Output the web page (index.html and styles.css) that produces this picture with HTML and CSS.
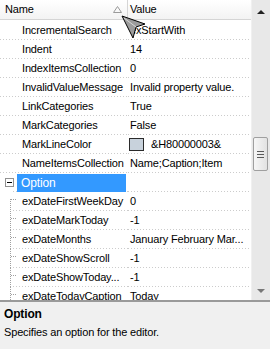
FILE: index.html
```html
<!DOCTYPE html>
<html lang="en">
<head>
  <meta charset="UTF-8">
  <title>Property grid</title>
  <link rel="stylesheet" href="styles.css">
</head>
<body>
  <div class="grid">
    <div class="main">
      <div class="list">
        <div class="header">
          <div class="hcell hname">
            <span>Name</span>
            <svg class="sort" width="9" height="7" viewBox="0 0 9 7"><path d="M4.5 0.5 L8.5 6.5 L0.5 6.5 Z" fill="none" stroke="#9a9a9a"/></svg>
          </div>
          <div class="hcell hvalue">Value</div>
        </div>
        <div class="rows">
          <div class="row"><div class="cell name">IncrementalSearch</div><div class="cell value">exStartWith</div></div>
          <div class="row"><div class="cell name">Indent</div><div class="cell value">14</div></div>
          <div class="row"><div class="cell name">IndexItemsCollection</div><div class="cell value">0</div></div>
          <div class="row"><div class="cell name">InvalidValueMessage</div><div class="cell value">Invalid property value.</div></div>
          <div class="row"><div class="cell name">LinkCategories</div><div class="cell value">True</div></div>
          <div class="row"><div class="cell name">MarkCategories</div><div class="cell value">False</div></div>
          <div class="row"><div class="cell name">MarkLineColor</div><div class="cell value"><span class="swatch"></span>&amp;H80000003&amp;</div></div>
          <div class="row"><div class="cell name">NameItemsCollection</div><div class="cell value">Name;Caption;Item</div></div>
          <div class="row category">
            <div class="cell name"><span class="expander"></span><span class="label">Option</span></div>
            <div class="cell value"></div>
          </div>
          <div class="row child first"><div class="cell name">exDateFirstWeekDay</div><div class="cell value">0</div></div>
          <div class="row child"><div class="cell name">exDateMarkToday</div><div class="cell value">-1</div></div>
          <div class="row child"><div class="cell name">exDateMonths</div><div class="cell value">January February Mar...</div></div>
          <div class="row child"><div class="cell name">exDateShowScroll</div><div class="cell value">-1</div></div>
          <div class="row child"><div class="cell name">exDateShowToday...</div><div class="cell value">-1</div></div>
          <div class="row child"><div class="cell name">exDateTodayCaption</div><div class="cell value">Today</div></div>
        </div>
      </div>
      <div class="vscroll">
        <div class="sbtn up"><span class="arrow-up"></span></div>
        <div class="track">
          <div class="thumb"><span></span><span></span><span></span></div>
        </div>
        <div class="sbtn down"><span class="arrow-down"></span></div>
      </div>
    </div>
    <div class="desc">
      <div class="desc-title">Option</div>
      <div class="desc-text">Specifies an option for the editor.</div>
    </div>

    <!-- mouse pointer dragged over the header -->
    <svg class="pointer" width="26" height="25" viewBox="0 0 26 25">
      <path d="M1 1 L24 9 L15 12 L12 23 Z" fill="#9c9c9c" stroke="#000" stroke-width="1"/>
      <path d="M3 3 L15 12" stroke="#d8d8d8" stroke-width="1"/>
    </svg>
  </div>
</body>
</html>
```

FILE: styles.css
```css
body {
  margin: 0;
  font-family: 'Liberation Sans', Arial, sans-serif;
  font-size: 11px;
  letter-spacing: -0.15px;
  color: #000;
  background: #fff;
}

.grid {
  position: relative;
  width: 270px;
  height: 349px;
  overflow: hidden;
  display: flex;
  flex-direction: column;
}

.main {
  display: flex;
  height: 300px;
  flex: none;
}

.list {
  flex: 1;
  min-width: 0;
  overflow: hidden;
}

.header {
  display: flex;
  height: 19px;
  line-height: 19px;
  border-bottom: 1px solid #d5d5d5;
  background: linear-gradient(to bottom, #ffffff, #f3f3f3);
}

.hcell {
  box-sizing: border-box;
}

.hname {
  width: 128px;
  padding: 0 5px 0 5px;
  border-right: 1px solid #d5d5d5;
  display: flex;
  align-items: center;
  justify-content: space-between;
}

.hvalue {
  flex: 1;
  padding-left: 2px;
}

.rows {
  padding-top: 1px;
}

.row {
  display: flex;
}

.cell {
  box-sizing: border-box;
  height: 19px;
  line-height: 18px;
  white-space: nowrap;
  overflow: hidden;
  background-image: repeating-linear-gradient(to right, #cccccc 0 1px, transparent 1px 3px);
  background-size: 100% 1px;
  background-position: 0 100%;
  background-repeat: no-repeat;
}

.name {
  width: 128px;
  flex: none;
  padding-left: 22px;
  padding-right: 2px;
}

.value {
  flex: 1;
  min-width: 0;
  padding-left: 2px;
  padding-right: 4px;
}

.swatch {
  display: inline-block;
  box-sizing: border-box;
  width: 15px;
  height: 13px;
  border: 1px solid #2b2b2b;
  background: #c8d2dc;
  vertical-align: -3px;
  margin-left: -1px;
  margin-right: 7px;
}

.category .name {
  padding-left: 5px;
  display: flex;
  align-items: center;
  background-position: 13px 100%;
}

.expander {
  box-sizing: border-box;
  width: 9px;
  height: 9px;
  flex: none;
  border: 1px solid #919191;
  background: linear-gradient(#000, #000) center / 5px 1px no-repeat, #fff;
  margin-right: 3px;
}

.label {
  flex: 1;
  height: 18px;
  background: #3399ff;
  color: #fff;
  padding-left: 4px;
  font-size: 12px;
}

.child .name {
  background-image:
    repeating-linear-gradient(to right, #cccccc 0 1px, transparent 1px 3px),
    repeating-linear-gradient(to bottom, #a0a0a0 0 1px, transparent 1px 2px),
    repeating-linear-gradient(to right, #a0a0a0 0 1px, transparent 1px 2px);
  background-size: calc(100% - 13px) 1px, 1px 100%, 6px 1px;
  background-position: 13px 100%, 10px 0, 11px 7px;
  background-repeat: no-repeat;
}

.child.first .name {
  background-size: calc(100% - 13px) 1px, 1px 12px, 6px 1px;
  background-position: 13px 100%, 10px 7px, 11px 7px;
}

.vscroll {
  width: 18px;
  flex: none;
  display: flex;
  flex-direction: column;
  background: #e8e8e8;
  border-left: 1px solid #f0f0f0;
}

.sbtn {
  display: flex;
  align-items: center;
  justify-content: center;
  flex: none;
}

.up {
  height: 24px;
}

.down {
  height: 18px;
}

.arrow-up {
  width: 0;
  height: 0;
  border-left: 4px solid transparent;
  border-right: 4px solid transparent;
  border-bottom: 4px solid #222;
}

.arrow-down {
  width: 0;
  height: 0;
  border-left: 4px solid transparent;
  border-right: 4px solid transparent;
  border-top: 4px solid #777;
}

.track {
  flex: 1;
}

.thumb {
  box-sizing: border-box;
  width: 15px;
  height: 34px;
  margin: 113px 0 0 1px;
  border: 1px solid #9f9f9f;
  border-radius: 2px;
  background: linear-gradient(to right, #f6f6f6, #e2e2e2);
  display: flex;
  flex-direction: column;
  align-items: center;
  justify-content: center;
  gap: 2px;
}

.thumb span {
  width: 7px;
  height: 1px;
  background: #5a5a5a;
}

.desc {
  flex: 1;
  background: #f0f0f0;
  border-top: 2px solid #9a9a9a;
  padding: 5px 4px 0;
}

.desc-title {
  font-weight: bold;
  font-size: 12px;
  line-height: 14px;
}

.desc-text {
  margin-top: 4px;
  line-height: 14px;
}

.pointer {
  position: absolute;
  left: 121px;
  top: 15px;
}
```
